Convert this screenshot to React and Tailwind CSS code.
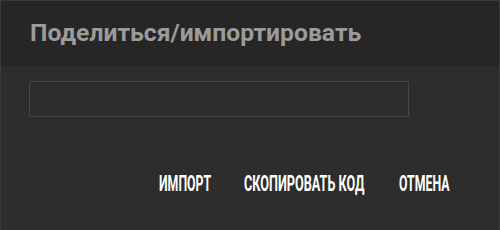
function Btn({ w, s = "scale-x-[0.56]", children }) {
  return (
    <button className={`${w} h-[24px] relative overflow-visible text-left`}>
      <span className={`absolute left-0 top-0 whitespace-nowrap text-white font-bold text-[22px] leading-[24px] uppercase origin-left ${s}`}>
        {children}
      </span>
    </button>
  );
}

export default function App() {
  return (
    <div className="w-[500px] h-[230px] bg-[#2d2d2d] border-l border-t border-r border-[#3a3a3a] flex flex-col" style={{ fontFamily: "Roboto, 'Liberation Sans', sans-serif" }}>
      <div className="h-[65px] bg-[#262626] flex items-center pl-[29px]">
        <span className="text-[24.7px] font-bold text-[#9b9b9b] leading-none">Поделиться/импортировать</span>
      </div>
      <div className="pl-[28px] pt-[15px]">
        <div className="w-[380px] h-[36px] border border-[#464646] rounded-[1px]"></div>
      </div>
      <div className="flex justify-end items-center gap-[34px] pt-[55px] pr-[49px]">
        <Btn w="w-[51px]">ИМПОРТ</Btn>
        <Btn w="w-[121px]" s="scale-x-[0.575]">СКОПИРОВАТЬ КОД</Btn>
        <Btn w="w-[51px]">ОТМЕНА</Btn>
      </div>
    </div>
  );
}
